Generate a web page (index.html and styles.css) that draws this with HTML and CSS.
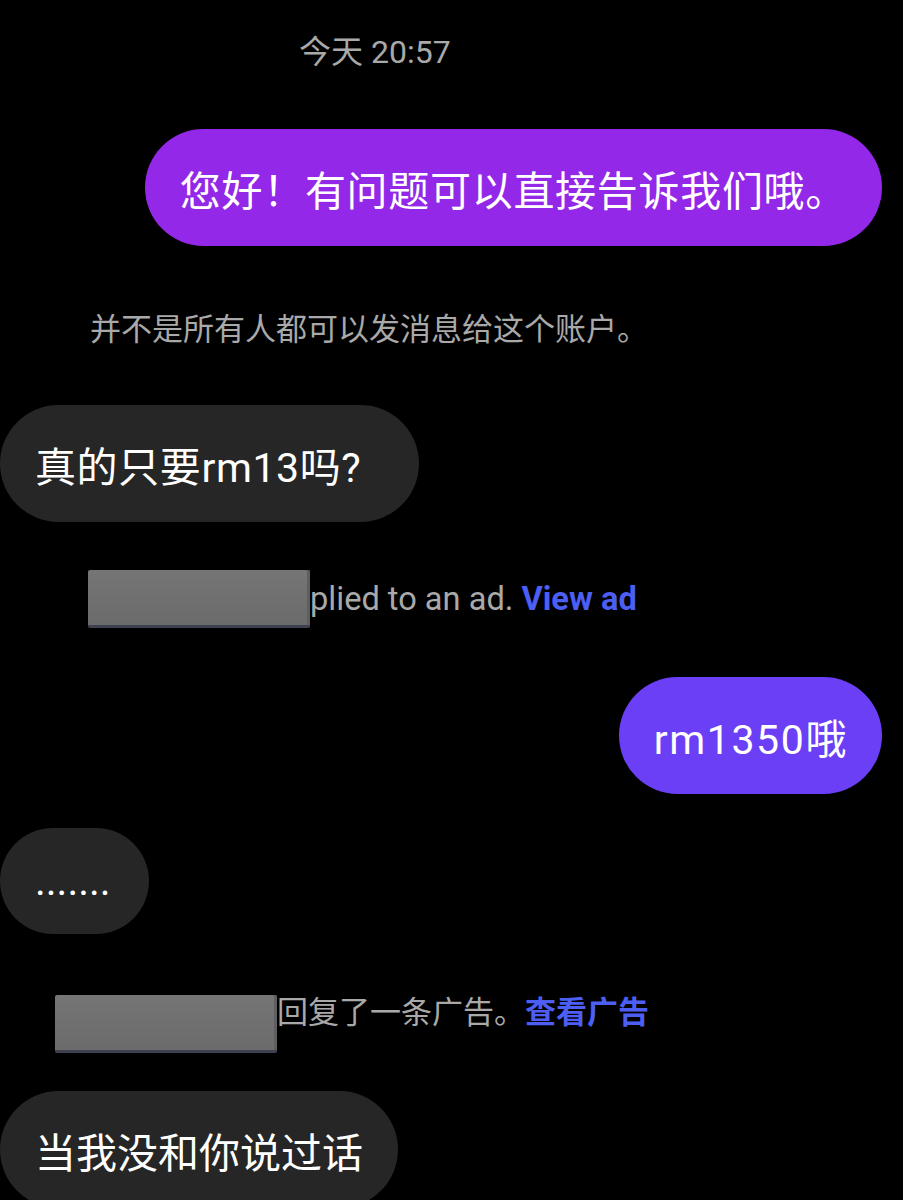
FILE: index.html
```html
<!DOCTYPE html>
<html lang="zh">
<head>
  <meta charset="UTF-8" />
  <meta name="viewport" content="width=device-width, initial-scale=1.0"/>
  <title>Chat</title>
  <link rel="stylesheet" href="styles.css">
</head>
<body>
  <main class="chat">
    <div class="stamp">今天 20:57</div>

    <div class="row out first">
      <div class="bubble purple">您好！有问题可以直接告诉我们哦。</div>
    </div>

    <p class="note">并不是所有人都可以发消息给这个账户。</p>

    <div class="row in second">
      <div class="bubble grey wide">真的只要rm13吗?</div>
    </div>

    <!-- ad reply notice, name blurred out -->
    <div class="ad-line en">
      <span class="redact"></span><span>plied to an ad.</span>&nbsp;<a href="#" class="view">View ad</a>
    </div>

    <div class="row out third">
      <div class="bubble violet">rm1350哦</div>
    </div>

    <div class="row in fourth">
      <div class="bubble grey short">.......</div>
    </div>

    <div class="ad-line zh">
      <span class="redact"></span><span class="ad-text">回复了一条广告。<a href="#" class="view">查看广告</a></span>
    </div>

    <div class="row in fifth">
      <div class="bubble grey">当我没和你说过话</div>
    </div>
  </main>
</body>
</html>
```

FILE: styles.css
```css
body {
  margin: 0;
  background: #000;
  font-family: Roboto, "Noto Sans CJK SC", sans-serif;
  overflow: hidden;
}

.chat {
  width: 903px;
  height: 1200px;
  padding-top: 32px;
  box-sizing: border-box;
  display: flex;
  flex-direction: column;
}

.stamp {
  height: 40px;
  line-height: 40px;
  padding-left: 299px;
  font-size: 32px;
  color: #a9a9a9;
}

.row {
  display: flex;
}
.row.out {
  justify-content: flex-end;
  padding-right: 21px;
}
.row.in {
  justify-content: flex-start;
}

.first { margin-top: 57px; }
.second { margin-top: 55px; }
.third { margin-top: 49px; }
.fourth { margin-top: 34px; }
.fifth { margin-top: 38px; }

/* Chat bubbles */
.bubble {
  height: 117px;
  display: flex;
  align-items: center;
  padding: 0 35px;
  border-radius: 59px;
  font-size: 41px;
  color: #fff;
  white-space: nowrap;
}
.bubble.purple {
  background: #9328e8;
  letter-spacing: 0.7px;
}
.bubble.violet {
  background: #6b3ff6;
  padding-left: 35px;
  padding-right: 34px;
  letter-spacing: 1.6px;
}
.bubble.grey { background: #262626; }
.bubble.wide {
  padding-right: 58px;
  letter-spacing: 0.6px;
}
.bubble.short {
  height: 106px;
  border-radius: 53px;
  padding-right: 38px;
}

.note {
  margin: 64px 0 0;
  padding-left: 90px;
  height: 40px;
  line-height: 40px;
  font-size: 31px;
  color: #a9a9a9;
}

.ad-line {
  display: flex;
  align-items: center;
  height: 58px;
  font-size: 31px;
  color: #a9a9a9;
  white-space: nowrap;
}
.ad-line.en {
  margin-top: 48px;
  padding-left: 88px;
  font-size: 32.6px;
}
.ad-line.zh {
  margin-top: 61px;
  padding-left: 55px;
  align-items: flex-start;
}
.ad-text {
  line-height: 36px;
}

.redact {
  display: inline-block;
  width: 222px;
  height: 55px;
  background: linear-gradient(180deg, #757575, #6b6b6b);
  border-bottom: 3px solid #3f4150;
  border-radius: 2px;
  box-shadow: inset -3px 0 0 #5f5f62;
}

.view {
  color: #4d5ef2;
  font-weight: bold;
  text-decoration: none;
}
```
